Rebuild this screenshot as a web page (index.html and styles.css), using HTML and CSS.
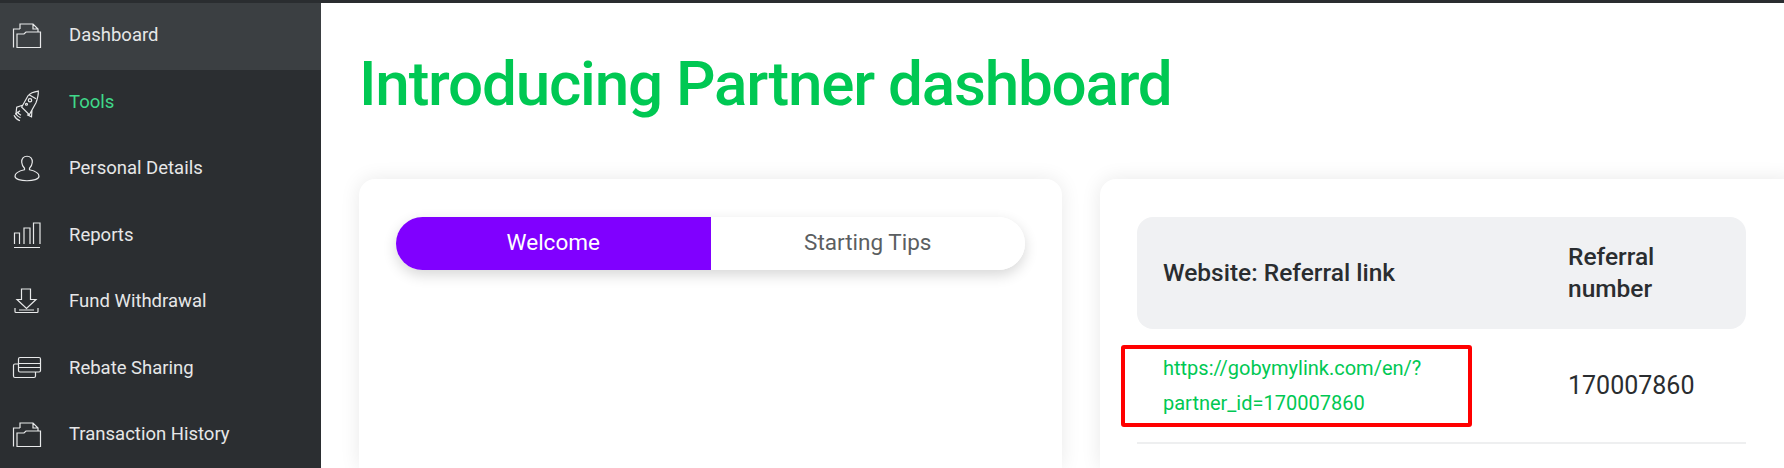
FILE: index.html
```html
<!DOCTYPE html>
<html lang="en">
<head>
  <meta charset="UTF-8">
  <title>Introducing Partner dashboard</title>
  <link rel="stylesheet" href="styles.css">
</head>
<body>
  <div class="layout">
    <nav class="sidebar">
      <a class="nav-item active" href="#">
        <svg class="nav-icon" viewBox="0 0 28 28"><path d="M.5 26.500V8H7M7 8V3h13l5 5v3M20 3v5h5M4 26.500V13h7l2-2h14.500v15.500z"/></svg>
        <span>Dashboard</span>
      </a>
      <a class="nav-item green" href="#">
        <svg class="nav-icon" viewBox="0 -1.750 28 28"><path d="M25.300 1.300C20 2 17 3.500 15 6L8.700 17.300 16.300 25 23 13c1.500-4 2.500-8 2.300-11.700zM9.500 15.500l-5.800 2L3 24l4-3M19 20l-.5 7-4.500-2M16 5l7 4"/><circle cx="17" cy="10.500" r="1.700"/><circle cx="13.500" cy="14.500" r="1"/><path d="M1 25.500c1 2 3 4.500 6 5.500M2.500 23.500c1 2 2.500 3.500 5 4.500M4.500 22c.5 1.500 1.500 2.500 3.500 3.500"/></svg>
        <span>Tools</span>
      </a>
      <a class="nav-item" href="#">
        <svg class="nav-icon" viewBox="0 -.750 28 28"><path d="M14 1.500c-3.500 0-5.500 2.500-5.300 6 .2 2.500 1.200 4.500 2.800 6V15C7 16 2 18 2 21.500 2 24.500 8 26 14 26s12-1.500 12-4.500c0-3.500-5-5.500-9.500-6.500v-1.500c1.600-1.500 2.600-3.500 2.800-6 .2-3.500-1.800-6-5.300-6z"/></svg>
        <span>Personal Details</span>
      </a>
      <a class="nav-item" href="#">
        <svg class="nav-icon" viewBox="0 0 28 28"><path d="M1.500 23V12h5v11M11 23V7h6v16M20.500 23V2h6.500v21M1 26.500h26"/></svg>
        <span>Reports</span>
      </a>
      <a class="nav-item" href="#">
        <svg class="nav-icon" viewBox="0 0 28 28"><path d="M8.500 2h9v10.500H23l-9.500 9-9.500-9h4.500zM2 21v3.500c0 .5.500 1 1 1h21c.5 0 1-.5 1-1V21M6 23h15"/></svg>
        <span>Fund Withdrawal</span>
      </a>
      <a class="nav-item" href="#">
        <svg class="nav-icon" viewBox="0 0 28 28"><rect x="5.500" y="3.500" width="22" height="14.500" rx="1.500"/><path d="M5.500 9.500h22M5.500 13.500h22M5.500 10H2c-1 0-1.500.5-1.500 1.500V22c0 1 .5 1.500 1.500 1.500h19c1 0 1.500-.5 1.500-1.500v-4"/></svg>
        <span>Rebate Sharing</span>
      </a>
      <a class="nav-item" href="#">
        <svg class="nav-icon" viewBox="0 0 28 28"><path d="M.5 26.500V8H7M7 8V3h13l5 5v3M20 3v5h5M4 26.500V13h7l2-2h14.500v15.500z"/></svg>
        <span>Transaction History</span>
      </a>
    </nav>

    <main class="content">
      <h1 class="page-title">Introducing Partner dashboard</h1>
      <div class="cards">
        <section class="card card-tips">
          <div class="toggle">
            <div class="toggle-btn selected">Welcome</div>
            <div class="toggle-btn">Starting Tips</div>
          </div>
        </section>
        <section class="card card-links">
          <table class="ref-table">
            <thead>
              <tr>
                <th class="col-link">Website: Referral link</th>
                <th class="col-num">Referral number</th>
              </tr>
            </thead>
            <tbody>
              <tr>
                <td class="col-link"><a class="ref-link" href="#">https://gobymylink.com/en/?<br>partner_id=170007860</a></td>
                <td class="col-num">170007860</td>
              </tr>
            </tbody>
          </table>
          <div class="highlight"></div>
        </section>
      </div>
    </main>
  </div>
</body>
</html>
```

FILE: styles.css
```css
* { margin: 0; padding: 0; box-sizing: border-box; }

html, body {
  height: 100%;
  overflow: hidden;
}

body {
  font-family: 'Roboto', sans-serif;
  background: #fff;
  color: #2a2d30;
  border-top: 3px solid #2a2d30;
}

.layout {
  display: flex;
  height: 100%;
}

.sidebar {
  flex: 0 0 321px;
  background: #2b2e31;
}

.nav-item {
  display: flex;
  align-items: center;
  height: 66.5px;
  padding: 0 0 2px 13px;
  gap: 28px;
  color: #e6e7e8;
  text-decoration: none;
  font-size: 18.5px;
  font-weight: 400;
}

.nav-item.active {
  background: #3b3f42;
}

.nav-item.green {
  color: #40d98a;
}

.nav-icon {
  width: 28px;
  height: 28px;
  flex: none;
  fill: none;
  stroke: #e8e9ea;
  stroke-width: 1.2;
  overflow: visible;
}

.content {
  flex: 1;
  min-width: 0;
  display: flex;
  flex-direction: column;
  overflow: hidden;
  padding: 46px 0 0 38px;
}

.page-title {
  font-size: 62px;
  letter-spacing: -1.22px;
  line-height: 70px;
  font-weight: 500;
  color: #00c853;
  margin-bottom: 60px;
  white-space: nowrap;
}

.cards {
  flex: 1;
  display: flex;
  gap: 38px;
}

.card {
  background: #fff;
  border-radius: 16px 16px 0 0;
  box-shadow: 0 0 20px rgba(0, 0, 0, 0.09);
  padding: 38px 37px 0 37px;
}

.card-tips {
  flex: 0 0 703px;
}

.card-links {
  flex: 0 0 700px;
  position: relative;
}

.toggle {
  display: flex;
  height: 53px;
  border-radius: 27px;
  overflow: hidden;
  box-shadow: 0 5px 14px rgba(0, 0, 0, 0.16);
}

.toggle-btn {
  flex: 1;
  display: flex;
  align-items: center;
  justify-content: center;
  padding-bottom: 3px;
  font-size: 22.5px;
  color: #5b5e61;
  background: #fff;
}

.toggle-btn.selected {
  background: #8000ff;
  color: #fff;
}

.ref-table {
  width: 609px;
  table-layout: fixed;
  border-collapse: separate;
  border-spacing: 0;
}

.ref-table th {
  height: 112px;
  background: #f0f1f3;
  text-align: left;
  font-size: 24.5px;
  line-height: 32px;
  font-weight: 500;
  color: #2a2d30;
}

.ref-table th:first-child { border-radius: 16px 0 0 16px; }
.ref-table th:last-child { border-radius: 0 16px 16px 0; }

.ref-table td {
  height: 115px;
  border-bottom: 2px solid #eeeff0;
  font-size: 25px;
  color: #2a2d30;
}

.ref-table .col-link {
  width: 431px;
  padding-left: 26px;
}

.ref-table th.col-num {
  padding-right: 40px;
}

.ref-link {
  font-size: 20px;
  line-height: 35px;
  display: block;
  color: #00c853;
  text-decoration: none;
}

.highlight {
  position: absolute;
  left: 21px;
  top: 166px;
  width: 351px;
  height: 82px;
  border: 4px solid #ff0000;
  border-radius: 3px;
}
```
